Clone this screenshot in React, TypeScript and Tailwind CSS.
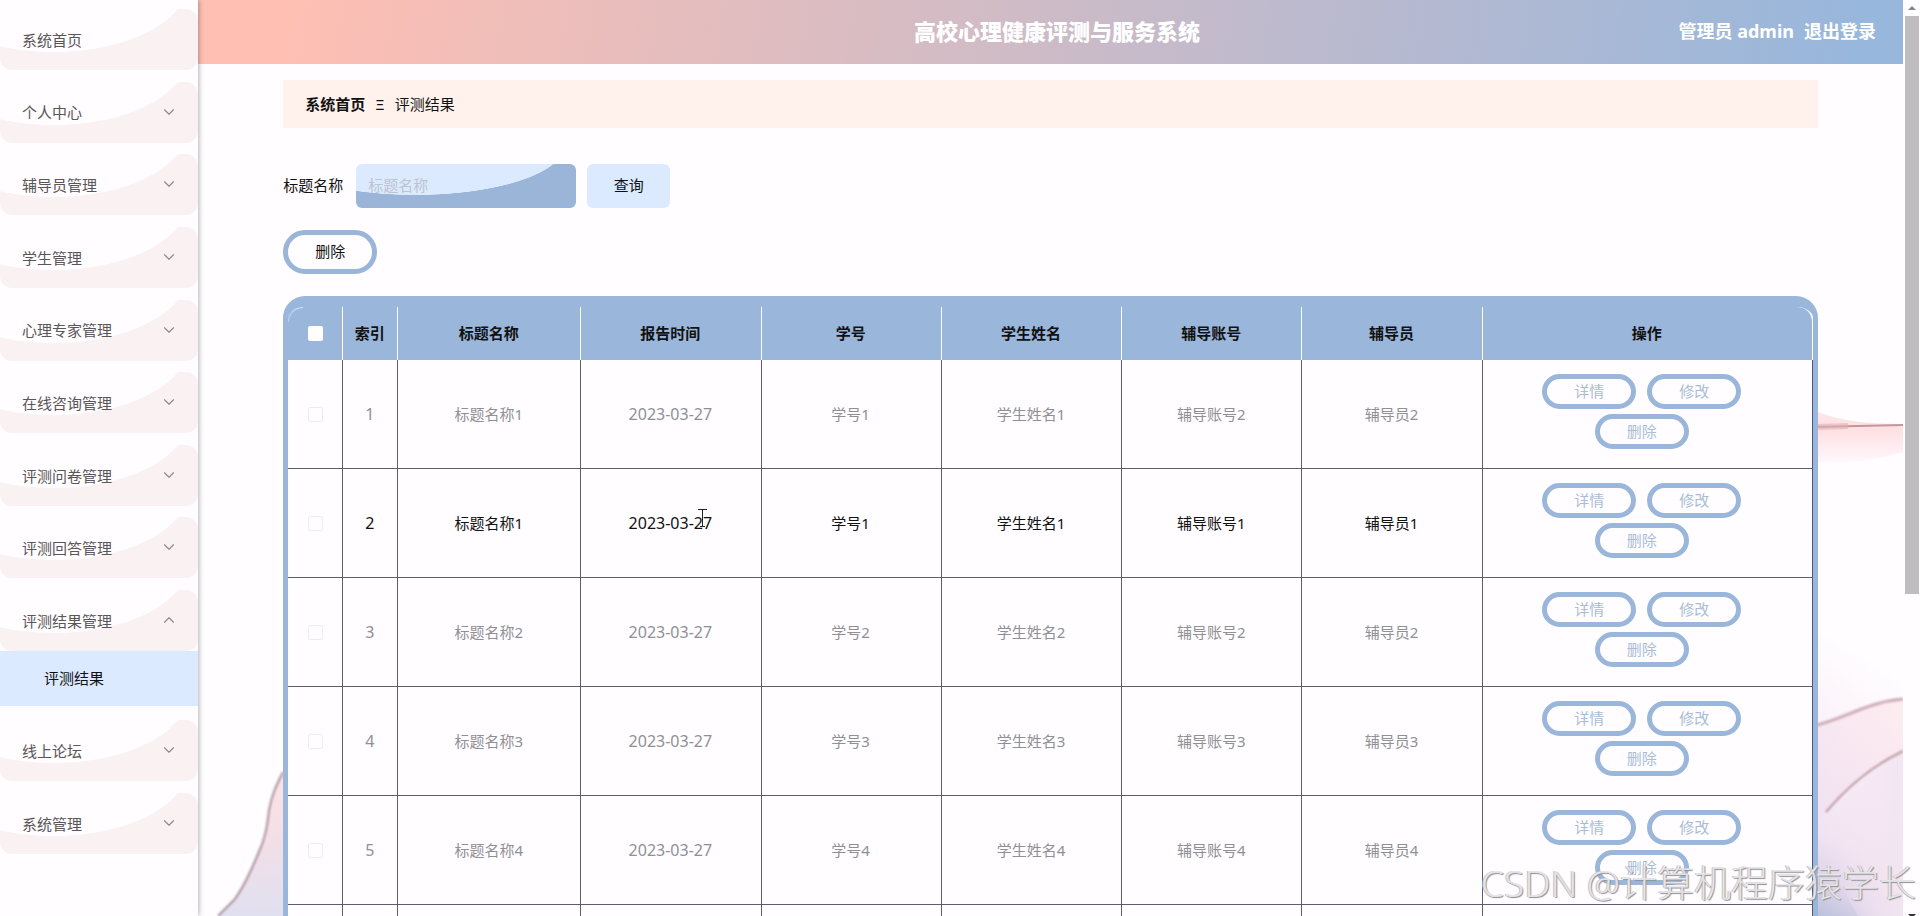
import { ChevronDown, ChevronUp } from "lucide-react";

type Row = {
  id: number;
  title: string;
  date: string;
  studentNo: string;
  studentName: string;
  tutorNo: string;
  tutor: string;
  active?: boolean;
};

const upperMenu = [
  "系统首页",
  "个人中心",
  "辅导员管理",
  "学生管理",
  "心理专家管理",
  "在线咨询管理",
  "评测问卷管理",
  "评测回答管理",
  "评测结果管理",
];
const lowerMenu = ["线上论坛", "系统管理"];

const columns = ["标题名称", "报告时间", "学号", "学生姓名", "辅导账号", "辅导员"];

const rows: Row[] = [
  { id: 1, title: "标题名称1", date: "2023-03-27", studentNo: "学号1", studentName: "学生姓名1", tutorNo: "辅导账号2", tutor: "辅导员2" },
  { id: 2, title: "标题名称1", date: "2023-03-27", studentNo: "学号1", studentName: "学生姓名1", tutorNo: "辅导账号1", tutor: "辅导员1", active: true },
  { id: 3, title: "标题名称2", date: "2023-03-27", studentNo: "学号2", studentName: "学生姓名2", tutorNo: "辅导账号2", tutor: "辅导员2" },
  { id: 4, title: "标题名称3", date: "2023-03-27", studentNo: "学号3", studentName: "学生姓名3", tutorNo: "辅导账号3", tutor: "辅导员3" },
  { id: 5, title: "标题名称4", date: "2023-03-27", studentNo: "学号4", studentName: "学生姓名4", tutorNo: "辅导账号4", tutor: "辅导员4" },
];

function MenuItem({ label, open }: { label: string; open?: boolean }) {
  const Icon = open ? ChevronUp : ChevronDown;
  return (
    <li>
      <a
        href="#"
        className="flex h-[61px] items-center justify-between rounded-xl bg-[radial-gradient(ellipse_68%_113%_at_27%_-42%,#fffdff_99%,#faf1f2_100%)] pr-5 pb-px pl-[22px] text-[15px] text-[#5a5557]"
      >
        <span className="pt-[2px]">{label}</span>
        {label !== "系统首页" && <Icon className="size-[18px] text-[#8f898b]" strokeWidth={1.5} />}
      </a>
    </li>
  );
}

function Sidebar() {
  return (
    <nav className="relative z-10 w-[198px] shrink-0 bg-[#fffdff] pt-[9px] shadow-[0_0_6px_rgba(0,0,0,0.4)]">
      <ul className="flex h-[642px] flex-col justify-between">
        {upperMenu.map((label) => (
          <MenuItem key={label} label={label} open={label === "评测结果管理"} />
        ))}
      </ul>
      <a href="#" className="flex h-[55px] items-center bg-[#dceaff] pl-11 text-[15px] text-[#111]">
        评测结果
      </a>
      <ul className="mt-[14px] flex flex-col gap-3">
        {lowerMenu.map((label) => (
          <MenuItem key={label} label={label} />
        ))}
      </ul>
    </nav>
  );
}

function Backdrop() {
  return (
    <svg className="absolute inset-0 size-full" viewBox="0 0 1705 852" preserveAspectRatio="none" aria-hidden="true">
      <defs>
        <linearGradient id="leftWash" x1="0" y1="0" x2="0" y2="1">
          <stop offset="0" stopColor="#f9e4e6" />
          <stop offset="0.45" stopColor="#f3dfe6" />
          <stop offset="1" stopColor="#e0e0f0" />
        </linearGradient>
        <linearGradient id="streak" x1="0" y1="0" x2="0" y2="1">
          <stop offset="0" stopColor="#fde6ea" />
          <stop offset="0.35" stopColor="#fde0e2" />
          <stop offset="1" stopColor="#fff8fd" />
        </linearGradient>
        <linearGradient id="rightWash" x1="0.2" y1="0" x2="0" y2="1">
          <stop offset="0" stopColor="#fffdff" />
          <stop offset="0.35" stopColor="#fbf1f9" />
          <stop offset="0.7" stopColor="#f1e3f2" />
          <stop offset="0.85" stopColor="#dfd5ea" />
          <stop offset="1" stopColor="#b9bfdb" />
        </linearGradient>
        <linearGradient id="rightShade" x1="0.2" y1="0" x2="0.9" y2="0">
          <stop offset="0" stopColor="#f3e4f1" stopOpacity="0" />
          <stop offset="1" stopColor="#f3e4f1" stopOpacity="0.9" />
        </linearGradient>
        <linearGradient id="rightPink" x1="1" y1="0" x2="0" y2="1">
          <stop offset="0" stopColor="#fde6e9" />
          <stop offset="1" stopColor="#efe0f1" />
        </linearGradient>
        <filter id="soft" x="-20%" y="-50%" width="140%" height="200%" filterUnits="objectBoundingBox">
          <feGaussianBlur stdDeviation="1" />
        </filter>
      </defs>
      <path d="M85 708C78 722 74 730 71 746C69 764 67 775 60 790C50 814 44 826 36 836L20 852H90V708Z" fill="url(#leftWash)" />
      <path d="M85 708C78 722 74 730 71 746C69 764 67 775 60 790C50 814 44 826 36 836L20 852" fill="none" stroke="#ab9199" strokeWidth="2" filter="url(#soft)" />
      <path d="M1620 348C1640 356 1665 360 1705 360V388C1680 396 1650 399 1620 399Z" fill="url(#streak)" />
      <path d="M1615 363L1660 362L1705 361" fill="none" stroke="#c49698" strokeWidth="2" />
      <path d="M1620 363L1650 362" fill="none" stroke="#dfb3b5" strokeOpacity="0.6" strokeWidth="6" />
      <rect x="1615" y="570" width="90" height="282" fill="url(#rightWash)" />
      <path d="M1615 663C1640 658 1665 640 1705 635V688C1680 700 1650 722 1630 747L1615 760Z" fill="url(#rightPink)" opacity="0.7" />
      <path d="M1615 770C1650 722 1680 700 1705 688V852H1660Z" fill="url(#rightShade)" />
      <path d="M1615 662C1645 656 1668 638 1705 635" fill="none" stroke="#cdabb5" strokeWidth="3" filter="url(#soft)" />
      <path d="M1628 748C1650 722 1678 700 1705 687" fill="none" stroke="#b8979f" strokeWidth="2" filter="url(#soft)" />
    </svg>
  );
}

function ActionButton({ label }: { label: string }) {
  return (
    <button
      type="button"
      className="mr-[11px] mb-[5px] h-[35px] w-[94px] rounded-[18px] border-[5px] border-[#9ab6da] bg-[#fffdff] text-[15px] leading-[25px] text-[#a9bdd6]"
    >
      {label}
    </button>
  );
}

const cell = "border-r border-b border-[#5e5c6a] py-0 pl-0 pr-px";
const headCell = "border-r border-white py-0 pl-0 pr-px font-bold";

function ResultTable() {
  return (
    <div className="mt-[22px] overflow-hidden rounded-t-[22px] border-x-[5px] border-t-[11px] border-[#9ab6da] bg-[#fffdff]">
      <table className="w-full table-fixed border-separate border-spacing-0 text-center text-[15px]">
        <colgroup>
          <col className="w-[55px]" />
          <col className="w-[55px]" />
          <col className="w-[12%]" />
          <col />
          <col />
          <col />
          <col />
          <col />
          <col className="w-[330px]" />
        </colgroup>
        <thead className="bg-[#9ab6da] text-[#111]">
          <tr className="h-[53px]">
            <th className="relative border-r border-white p-0">
              <span className="absolute top-0 left-0 size-[15px] rounded-tl-[15px] border-t border-l border-t-white/60 border-l-white/40" />
              <input
                type="checkbox"
                aria-label="全选"
                className="mx-auto block size-[15px] appearance-none rounded-[2px] bg-[#fffdff]"
              />
            </th>
            <th className={headCell}>索引</th>
            {columns.map((name) => (
              <th key={name} className={headCell}>
                {name}
              </th>
            ))}
            <th className={`${headCell} rounded-tr-[15px]`}>操作</th>
          </tr>
        </thead>
        <tbody>
          {rows.map((row) => (
            <tr key={row.id} className={row.active ? "h-[109px] text-[#111]" : "h-[109px] text-[#909094]"}>
              <td className="border-r border-b border-[#5e5c6a] p-0">
                <input
                  type="checkbox"
                  aria-label={`选择第${row.id}行`}
                  className="mx-auto block size-[15px] appearance-none rounded-[2px] border border-[#efecf1] bg-[#fffdff]"
                />
              </td>
              <td className={`${cell} text-base`}>{row.id}</td>
              <td className={cell}>{row.title}</td>
              <td className={`${cell} relative text-base`}>
                {row.date}
                {row.active && (
                  <svg className="absolute top-10 left-[117px] h-[18px] w-[9px]" viewBox="0 0 9 18" fill="none" stroke="#222" aria-hidden="true">
                    <path d="M0 .5H9M4.500 .5V17.500M2 17.500H7" />
                  </svg>
                )}
              </td>
              <td className={cell}>{row.studentNo}</td>
              <td className={cell}>{row.studentName}</td>
              <td className={cell}>{row.tutorNo}</td>
              <td className={cell}>{row.tutor}</td>
              <td className="border-r border-b border-r-[#4c5684] border-b-[#5e5c6a] px-4 py-0">
                <div className="flex flex-wrap justify-center">
                  <ActionButton label="详情" />
                  <ActionButton label="修改" />
                  <ActionButton label="删除" />
                </div>
              </td>
            </tr>
          ))}
          <tr className="h-[109px]">
            {["select", "index", ...columns, "actions"].map((key) => (
              <td key={key} className={cell} />
            ))}
          </tr>
        </tbody>
      </table>
    </div>
  );
}

function ScrollTrack() {
  return (
    <div className="flex w-[17px] shrink-0 flex-col items-center bg-[#fffdff]" aria-hidden="true">
      <svg className="h-4 w-[17px] shrink-0" viewBox="0 0 17 16">
        <path d="M5 10L9 6L13 10Z" fill="#858487" />
      </svg>
      <div className="h-[578px] w-[14px] bg-[#bfbdc0]" />
      <svg className="mt-auto h-[2px] w-[17px] shrink-0" viewBox="0 0 17 2">
        <path d="M5 0H13L11 2H7Z" fill="#333" />
      </svg>
    </div>
  );
}

export default function App() {
  return (
    <div className="relative flex h-screen overflow-hidden bg-[#fffdff] font-['Noto_Sans','Noto_Sans_CJK_SC',sans-serif] text-[15px] text-[#111]">
      <Sidebar />
      <div className="flex min-w-0 flex-1 flex-col">
        <header className="grid h-16 shrink-0 grid-cols-[1fr_auto_1fr] items-center bg-[linear-gradient(100deg,#ffbfb3_5%,#98b7dc_97%)] pr-[27px] pb-[2px] pl-10 font-bold text-white">
          <h1 className="col-start-2 text-[22px] font-black">高校心理健康评测与服务系统</h1>
          <div className="flex justify-end gap-[10px] text-lg">
            <span>管理员 admin</span>
            <a href="#">退出登录</a>
          </div>
        </header>
        <main className="relative min-h-0 flex-1 overflow-hidden">
          <Backdrop />
          <div className="relative px-[5%] pt-4">
            <div className="flex h-12 items-center gap-[10px] bg-[#fff2ed] px-[22px]">
              <a href="#" className="font-bold">
                系统首页
              </a>
              <span>Ξ</span>
              <span>评测结果</span>
            </div>
            <form className="mt-9 flex items-center" onSubmit={(e) => e.preventDefault()}>
              <label htmlFor="title-name" className="pb-[2px]">
                标题名称
              </label>
              <input
                id="title-name"
                type="text"
                placeholder="标题名称"
                className="ml-[13px] h-11 w-[220px] rounded-md bg-[radial-gradient(ellipse_68%_113%_at_27%_-42%,#dceaff_99%,#9ab5d8_100%)] px-3 pb-[2px] placeholder:text-[#bcc3d1]"
              />
              <button type="submit" className="ml-[11px] h-11 w-[83px] rounded-md bg-[#dceaff] pb-[2px]">
                查询
              </button>
            </form>
            <button
              type="button"
              className="mt-[22px] block h-11 w-[94px] rounded-[22px] border-[5px] border-[#9ab5d8] bg-[#fffdff] pb-[2px]"
            >
              删除
            </button>
            <ResultTable />
          </div>
        </main>
      </div>
      <ScrollTrack />
      <div className="pointer-events-none absolute right-1 bottom-2 z-20 font-['Noto_Sans','Noto_Sans_CJK_SC',sans-serif] text-[37px] leading-[50px] font-light whitespace-nowrap text-[#ececee]/90 [text-shadow:1px_1px_1px_#8f8f94,-1px_0_0_#c4c4c8]">
        CSDN @计算机程序猿学长
      </div>
    </div>
  );
}
